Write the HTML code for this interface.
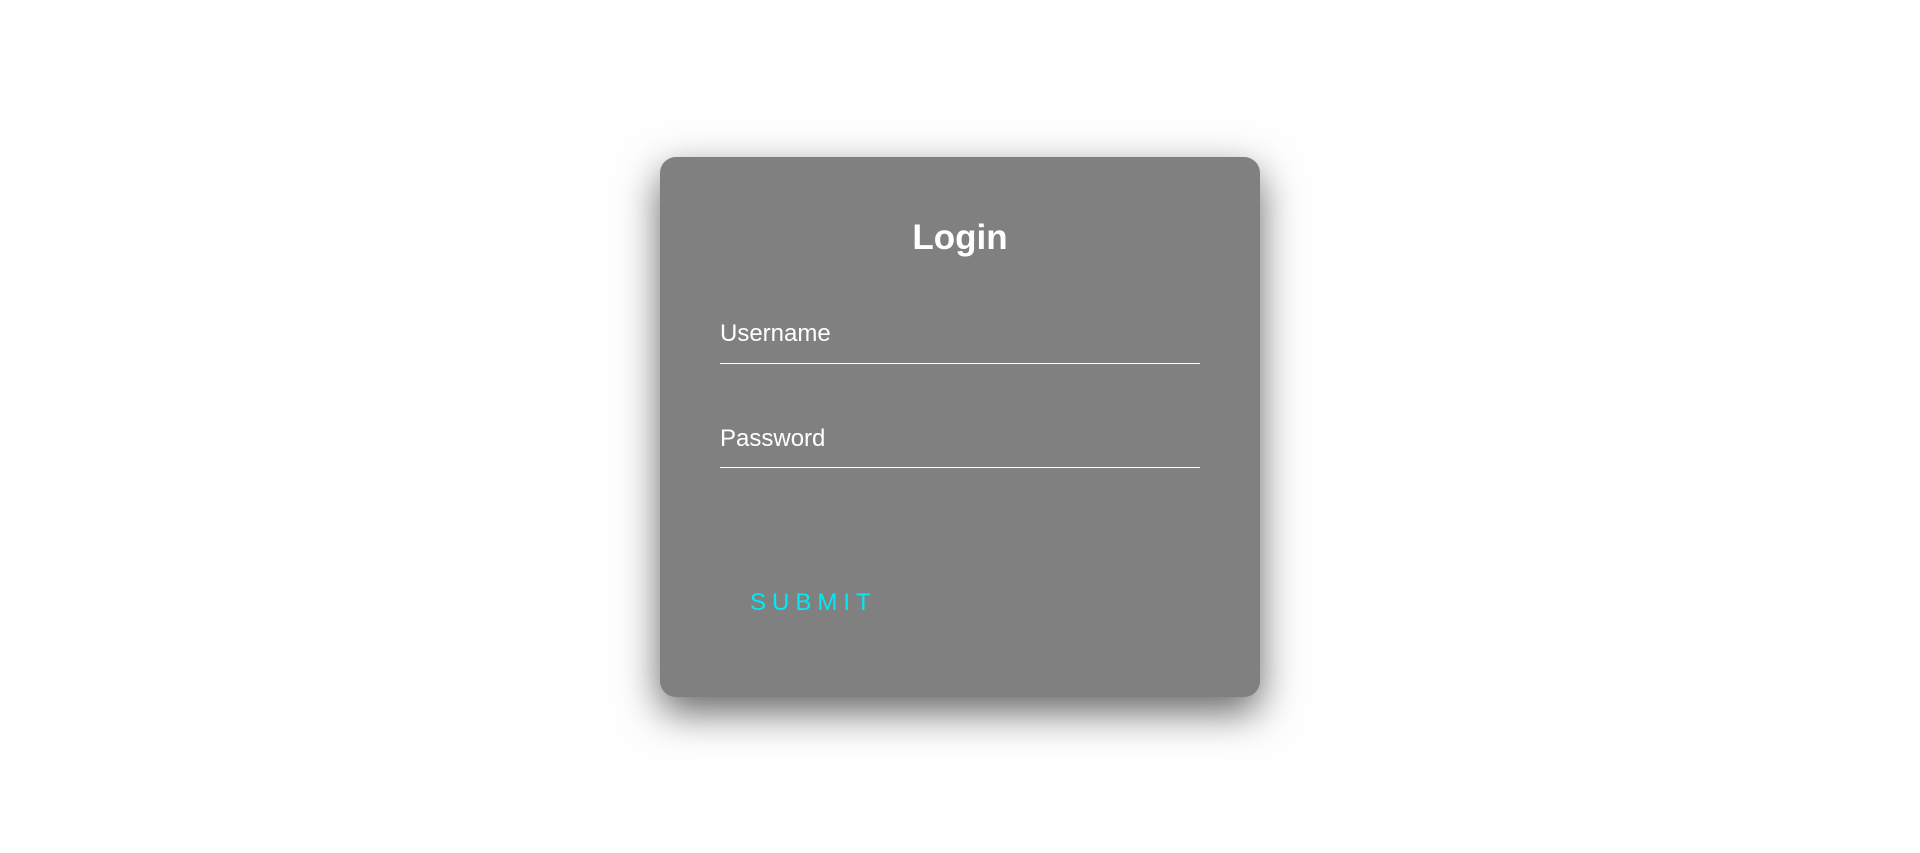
<!DOCTYPE html>
<html><head><style>
html,body{margin:0;width:1920px;height:853px;background:#fefefe;overflow:hidden;font-family:"Liberation Sans",Arial,sans-serif}
.card{position:absolute;left:660px;top:157px;width:600px;height:540px;background:#808080;border-radius:16px;box-shadow:0 15px 40px rgba(0,0,0,.6)}
.t{position:absolute;color:#fff;white-space:nowrap;line-height:1}
h2{position:absolute;margin:0;left:0;width:600px;text-align:center;top:63px;font-size:35px;font-weight:bold;color:#fff;line-height:1}
.line{position:absolute;left:60px;width:480px;height:1px;background:#fff}
.sub{position:absolute;left:90px;top:434px;color:#03e9f4;font-size:24px;letter-spacing:6px;line-height:1}
</style></head><body>
<div class="card">
<h2>Login</h2>
<div class="t" style="left:60px;top:165px;font-size:24px">Username</div>
<div class="line" style="top:206px"></div>
<div class="t" style="left:60px;top:270px;font-size:24px">Password</div>
<div class="line" style="top:310px"></div>
<div class="sub">SUBMIT</div>
</div>
</body></html>
